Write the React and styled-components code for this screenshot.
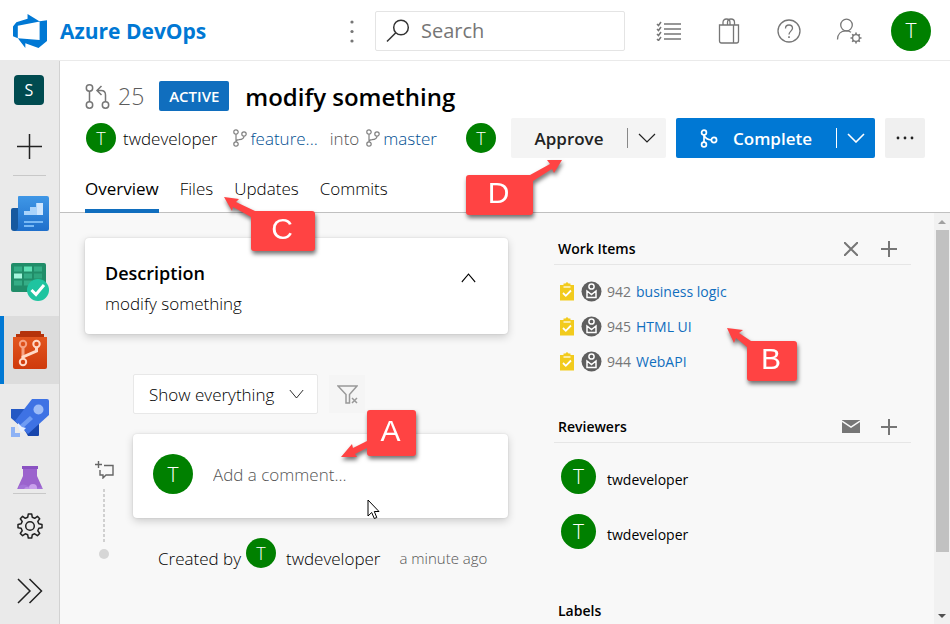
import React from "react";
import styled, { createGlobalStyle, css } from "styled-components";

const GlobalStyle = createGlobalStyle`
  *, *::before, *::after { box-sizing: border-box; }
  body {
    margin: 0;
    font-family: "Open Sans", "Noto Sans", sans-serif;
    font-size: 17px;
    font-weight: 300;
    color: #000;
    background: #fff;
  }
  button, input, select { font: inherit; color: inherit; }
  button { border: 0; background: none; padding: 0; cursor: pointer; }
  a { color: inherit; text-decoration: none; }
  h1, h2, ul, p { margin: 0; padding: 0; }
  ul { list-style: none; }
  svg { display: block; flex: none; }
`;

const Page = styled.div`
  position: relative;
  display: flex;
  flex-direction: column;
  height: 100vh;
  overflow: hidden;
`;

/* ---------- top bar ---------- */
const TopBar = styled.header`
  display: flex;
  align-items: center;
  flex: none;
  height: 61px;
  padding: 1px 19px 0 13px;
  border-bottom: 1px solid #eaeaea;
`;
const Brand = styled.a`
  display: flex;
  align-items: center;
  gap: 13px;
  margin-right: auto;
  color: #0078d4;
  font-size: 21px;
  font-weight: 700;
  white-space: nowrap;
`;
const IconButton = styled.button`
  display: flex;
  align-items: center;
  justify-content: center;
  flex: none;
  width: ${(p) => p.$width || 60}px;
  height: ${(p) => p.$height || 40}px;
  color: ${(p) => p.$color || "#767676"};
  background: ${(p) => p.$bg || "none"};
  border-radius: 2px;
`;
const SearchBox = styled.label`
  display: flex;
  align-items: center;
  gap: 11px;
  width: 250px;
  height: 40px;
  margin: 0 14px 0 7px;
  padding: 0 10px;
  border: 1px solid #e4e4e4;
  border-radius: 2px;
  color: #333;
`;
const TextField = styled.input`
  flex: 1;
  min-width: 0;
  border: 0;
  outline: 0;
  padding: 0;
  background: none;
  font-size: ${(p) => p.$size}px;
  &::placeholder { color: #555; opacity: 1; }
`;
const SearchField = styled(TextField)`
  font-weight: 400;
  &::placeholder { color: #767676; }
`;
const Avatar = styled.span`
  display: flex;
  align-items: center;
  justify-content: center;
  flex: none;
  width: ${(p) => p.$size}px;
  height: ${(p) => p.$size}px;
  border-radius: 50%;
  background: #008000;
  color: #fff;
  font-size: ${(p) => (p.$size > 30 ? 21 : 18)}px;
  font-weight: 300;
  line-height: 1;
`;
const AccountButton = styled.button`
  margin-left: 12px;
`;

/* ---------- side bar ---------- */
const Body = styled.div`
  display: flex;
  flex: 1;
  min-height: 0;
`;
const SideBar = styled.nav`
  display: flex;
  flex-direction: column;
  flex: none;
  width: 60px;
  background: #eaeaea;
  border-right: 1px solid #d2d2d2;
`;
const SideTop = styled.div`
  display: flex;
  flex-direction: column;
  align-items: center;
  flex: none;
  padding-top: 14px;
`;
const ProjectTile = styled.a`
  display: flex;
  align-items: center;
  justify-content: center;
  width: 30px;
  height: 30px;
  margin-right: 1px;
  border-radius: 4px;
  background: #004b50;
  color: #fff;
  font-size: 16px;
  font-weight: 400;
`;
const SideButton = styled.button`
  display: flex;
  align-items: center;
  justify-content: center;
  width: 100%;
  height: ${(p) => p.$height}px;
  padding-top: ${(p) => p.$top || 0}px;
  color: #222;
`;
const SideRule = styled.hr`
  flex: none;
  width: 33px;
  height: 1px;
  margin: 0 auto;
  border: 0;
  background: #c8c8c8;
`;
const HubList = styled.ul`
  flex: 1;
  min-height: 0;
  margin: 4px 0;
  overflow: hidden;
`;
const HubLink = styled.a`
  display: flex;
  align-items: center;
  justify-content: center;
  height: 68px;
  border-left: 4px solid transparent;
  padding-right: 4px;
  ${(p) => p.$active && css`
    background: #dcdcdc;
    border-left-color: #0078d4;
  `}
`;

/* ---------- pull request header ---------- */
const Main = styled.main`
  display: flex;
  flex-direction: column;
  flex: 1;
  min-width: 0;
`;
const PrHeader = styled.div`
  flex: none;
  padding: 15px 25px 0;
  border-bottom: 1px solid #c0c0c0;
`;
const TitleRow = styled.div`
  display: flex;
  align-items: center;
  height: 40px;
  color: #767676;
`;
const PrNumber = styled.span`
  margin-left: 8px;
  color: #5c5c5c;
  font-size: 23px;
`;
const Badge = styled.span`
  margin: 0 16px 0 15px;
  width: 70px;
  text-align: center;
  border-radius: 2px;
  background: #106ebe;
  color: #fff;
  font-size: 15px;
  font-weight: 600;
  line-height: 30px;
`;
const Title = styled.h1`
  color: #000;
  font-size: 24px;
  font-weight: 600;
  white-space: nowrap;
`;
const MetaRow = styled.div`
  display: flex;
  align-items: center;
  height: 44px;
  padding-left: 1px;
  white-space: nowrap;
`;
const Author = styled.span`
  margin: 0 16px 0 7px;
`;
const BranchLink = styled.a`
  display: flex;
  align-items: center;
  gap: 3px;
  color: #004f92;
  svg { color: #808080; }
`;
const Into = styled.span`
  margin: 0 7px 0 12px;
  color: #555;
`;
const Actions = styled.div`
  display: flex;
  align-items: center;
  gap: 10px;
  margin-left: auto;
`;
const ApproverAvatar = styled(Avatar)`
  margin-right: 5px;
`;
const SplitButton = styled.div`
  display: flex;
  align-items: center;
  width: ${(p) => p.$width}px;
  height: 40px;
  border-radius: 2px;
  background: ${(p) => (p.$primary ? "#0078d4" : "#f4f4f4")};
  color: ${(p) => (p.$primary ? "#fff" : "#222")};
  font-weight: 600;
`;
const SplitMain = styled.button`
  display: flex;
  align-items: center;
  justify-content: center;
  gap: 15px;
  flex: 1;
  height: 40px;
`;
const SplitMore = styled.button`
  display: flex;
  align-items: center;
  justify-content: center;
  width: 39px;
  height: 20px;
  border-left: 1px solid ${(p) => (p.$primary ? "#fff" : "#888")};
`;
const Tabs = styled.nav`
  display: flex;
  gap: 21px;
  height: 53px;
  padding-top: 8px;
  margin-bottom: -1px;
`;
const Tab = styled.a`
  display: flex;
  align-items: center;
  padding-bottom: ${(p) => (p.$active ? 0 : 4)}px;
  border-bottom: ${(p) => (p.$active ? "4px solid #106ebe" : "0")};
  font-weight: ${(p) => (p.$active ? 400 : 300)};
`;

/* ---------- content ---------- */
const Content = styled.div`
  display: flex;
  flex: 1;
  min-height: 0;
  overflow: hidden;
  background: #f8f8f8;
`;
const Columns = styled.div`
  display: grid;
  grid-template-columns: minmax(0, 423fr) minmax(0, 357fr);
  column-gap: 46px;
  flex: 1;
  padding: 25px 23px 0 25px;
`;
const Card = styled.section`
  display: flex;
  border-radius: 4px;
  background: #fff;
  box-shadow: 0 3px 8px rgba(0, 0, 0, 0.18), 0 0 2px rgba(0, 0, 0, 0.12);
`;
const DescriptionCard = styled(Card)`
  justify-content: space-between;
  height: 96px;
  padding: 20px;
  line-height: 30px;
`;
const CardTitle = styled.h2`
  color: #000;
  font-size: 18px;
  font-weight: 600;
  line-height: 31px;
`;
const CollapseButton = styled.button`
  width: 40px;
  height: 40px;
  display: flex;
  align-items: center;
  justify-content: center;
`;
const Feed = styled.div`
  padding: 40px 0 0 48px;
`;
const FilterRow = styled.div`
  display: flex;
  align-items: center;
  gap: 11px;
  margin-bottom: 20px;
`;
const SelectFrame = styled.div`
  display: grid;
  align-items: center;
  width: 185px;
  height: 40px;
  border: 1px solid #e8e8e8;
  border-radius: 2px;
  background: #fff;
  & > * { grid-area: 1 / 1; }
  svg { justify-self: end; margin-right: 13px; pointer-events: none; }
`;
const FeedSelect = styled.select`
  appearance: none;
  width: 100%;
  height: 38px;
  padding: 0 36px 0 15px;
  border: 0;
  outline: 0;
  background: none;
`;
const ClearFilter = styled.button`
  display: flex;
  align-items: center;
  justify-content: center;
  width: 36px;
  height: 38px;
  background: #f5f5f5;
  color: #999;
`;
const Thread = styled.div`
  display: grid;
  grid-template-columns: 38px 1fr;
  margin-left: -38px;
`;
const Rail = styled.div`
  display: flex;
  flex-direction: column;
  align-items: flex-start;
  padding-top: 27px;
  color: #666;
`;
const RailLine = styled.span`
  width: 2px;
  height: 54px;
  margin: 10px 0 6px 8px;
  background: repeating-linear-gradient(#d0d0d0 0 3px, transparent 3px 5px);
`;
const RailDot = styled.span`
  width: 10px;
  height: 10px;
  margin-left: 4px;
  border-radius: 50%;
  background: #d6d6d6;
`;
const CommentCard = styled(Card)`
  align-items: center;
  gap: 20px;
  height: 84px;
  padding: 0 20px 4px;
`;
const CreatedRow = styled.p`
  display: flex;
  align-items: center;
  gap: 5px;
  height: 40px;
  margin: 20px 0 0 25px;
  white-space: nowrap;
`;
const CreatedAvatar = styled(Avatar)`
  margin-bottom: 10px;
`;
const CreatedName = styled.span`
  margin: 0 14px 0 5px;
`;
const Muted = styled.span`
  color: #555;
  font-size: 15px;
`;

const Side = styled.aside`
  font-size: 14px;
  font-weight: 400;
`;
const SideHeader = styled.div`
  display: flex;
  align-items: center;
  height: 32px;
  margin-top: ${(p) => p.$top}px;
  padding: 0 3px 0 4px;
  border-bottom: 1px solid #e6e6e6;
`;
const SideTitle = styled.h2`
  flex: 1;
  color: #000;
  font-size: 14px;
  font-weight: 600;
`;
const WorkItem = styled.li`
  display: flex;
  align-items: center;
  height: 35px;
  padding-left: 6px;
`;
const WorkList = styled.ul`
  padding-top: 9px;
`;
const WorkId = styled.span`
  margin: 0 5px 0 5px;
  color: #767676;
`;
const WorkLink = styled.a`
  color: #106ebe;
`;
const PersonIcon = styled.svg`
  margin-left: 7px;
`;
const ReviewerList = styled.ul`
  padding-top: 6px;
`;
const Reviewer = styled.li`
  display: flex;
  align-items: center;
  gap: 11px;
  height: 55px;
  padding-left: 7px;
  color: #000;
`;
const ReviewerName = styled.span`
  padding-top: 5px;
`;

const ScrollTrack = styled.div`
  display: flex;
  flex-direction: column;
  align-items: center;
  flex: none;
  width: 16px;
  background: #f1f1f1;
`;
const ScrollArrow = styled.button`
  display: flex;
  align-items: center;
  justify-content: center;
  width: 16px;
  height: 17px;
  color: ${(p) => p.$color};
`;
const ScrollThumb = styled.div`
  width: 13px;
  flex: 322;
  background: #c1c1c1;
`;
const ScrollRest = styled.div`
  flex: 55;
`;

/* ---------- markers lying over the page ---------- */
const Marker = styled.div`
  position: absolute;
  left: ${(p) => p.$x}px;
  top: ${(p) => p.$y}px;
  width: ${(p) => p.$w}px;
  height: ${(p) => p.$h}px;
  display: flex;
  align-items: center;
  justify-content: center;
  padding: 0 2px 4px 0;
  border-radius: 3px;
  background: #ff4343;
  color: #fff;
  font-family: "Liberation Sans", Arial, sans-serif;
  font-size: 30px;
  font-weight: 400;
  line-height: 1;
  filter: drop-shadow(1px 3px 2px rgba(0, 0, 0, 0.55));
`;
const MarkerArrow = styled.svg`
  position: absolute;
  left: 0;
  top: 0;
  overflow: visible;
`;
const Pointer = styled.svg`
  position: absolute;
  left: 367px;
  top: 499px;
`;

const line = { fill: "none", stroke: "currentColor" };

function Chevron({ up, width = 18, weight = 1.2 }) {
  return (
    <svg width={width} height="10" viewBox="0 0 18 10" preserveAspectRatio="none" {...line} strokeWidth={weight}>
      <path d={up ? "M1 9l8-8 8 8" : "M1 1l8 8 8-8"} />
    </svg>
  );
}

function BranchIcon() {
  return (
    <svg width="14" height="18" viewBox="0 0 14 18" {...line} strokeWidth="1.2">
      <circle cx="3" cy="3" r="2.2" />
      <circle cx="3" cy="15" r="2.2" />
      <circle cx="11" cy="5" r="2.2" />
      <path d="M3 5.2v7.6M11 7.2c0 3-3 3.3-5 3.5-1.500.1-3 .6-3 2.100" />
    </svg>
  );
}

function LogoIcon() {
  return (
    <svg width="34" height="34" viewBox="1 1 14 14" fill="#0078d4">
      <path d="M15 3.622v8.512L11.500 15l-5.425-1.975v1.958L3.004 10.970l8.951.7V4.005L15 3.622zm-2.984.428L6.994 1v2.001L2.382 4.356 1 6.130v4.029l1.978.873V5.869l9.038-1.818z" />
    </svg>
  );
}

function OverviewIcon() {
  return (
    <svg width="38" height="36" viewBox="0 0 38 36">
      <defs>
        <linearGradient id="ov" x1="0" y1="0" x2="0" y2="1">
          <stop offset="0" stopColor="#3f97e6" /><stop offset="1" stopColor="#1f6fcb" />
        </linearGradient>
      </defs>
      <path d="M0 14q0-2 2-2h10v23H3q-3 0-3-3z" fill="#17599f" />
      <path d="M8 0h28q2 0 2 2v31q0 2-2 2H4q3-1 3-4V1q0-1 1-1z" fill="url(#ov)" />
      <path d="M13 15h6v-4h6V7h7v12H13z" fill="#a9d3fb" />
      <path d="M26 7h6v12h-6z" fill="#cfe6fd" />
      <path d="M13 25h19v2H13zM13 29h10v2H13z" fill="#78b8f5" />
    </svg>
  );
}

function BoardsIcon() {
  return (
    <svg width="38" height="38" viewBox="0 0 38 38">
      <rect x="0" y="0" width="35" height="29" rx="2" fill="#218d69" />
      <path d="M3 3.500h8v5H3zM23 3.500h8v5h-8zM13 10.500h8v5h-8zM3 17.500h8v5H3zM13 17.500h8v5h-8z" fill="#35ad86" />
      <path d="M13 3.500h8v5h-8z" fill="#5fe0b5" />
      <path d="M3 10.500h8v5H3z" fill="#a4f5dc" />
      <path d="M23 10.500h8v5h-8z" fill="#2ea57d" />
      <circle cx="27" cy="27" r="11" fill="#1fc4a0" />
      <path d="M20.500 27l4.500 4.500 8-9.500" fill="none" stroke="#fff" strokeWidth="3" />
    </svg>
  );
}

function ReposIcon() {
  return (
    <svg width="36" height="38" viewBox="0 0 36 38">
      <defs>
        <linearGradient id="rp" x1="0" y1="0" x2="0" y2="1">
          <stop offset="0" stopColor="#e2561f" /><stop offset="1" stopColor="#cf3a0c" />
        </linearGradient>
      </defs>
      <path d="M4 3h4V1q0-1 1-1h19q1 0 1 1v2h3v6H4z" fill="#b5330b" />
      <path d="M1 6h34v30q0 2-2 2H3q-2 0-2-2z" fill="url(#rp)" />
      <g fill="none" stroke="#ffd9c8" strokeWidth="2">
        <circle cx="11" cy="13" r="3.200" stroke="#f6a283" /><circle cx="24.500" cy="13" r="3.200" /><circle cx="11" cy="31" r="3.200" />
        <path d="M11 16v12" stroke="#f6a283" strokeWidth="3" /><path d="M24.500 16v4L11 26v2" strokeWidth="3" />
      </g>
    </svg>
  );
}

function PipelinesIcon() {
  return (
    <svg width="38" height="38" viewBox="0 0 38 38">
      <path d="M0 10h16L8 26l-8-7z" fill="#2458c4" />
      <path d="M13 30l15-9v15q0 1-1 1H17z" fill="#1846ad" />
      <path d="M21 0h15q2 0 2 2v14L17 35 4 22z" fill="#3e72e4" />
      <path d="M19 17l3 3-10 9-3-3z" fill="#6f9cf3" />
      <path d="M7 24l4 4 4 1-3 3 1 2-4-2-2-5z" fill="#e8f0ff" />
      <circle cx="27.500" cy="10.500" r="5" fill="#9dbcf7" />
      <path d="M0 28h4v6h5v4H0z" fill="#8db2f5" />
    </svg>
  );
}

function TestPlansIcon() {
  return (
    <svg width="28" height="40" viewBox="0 0 28 40">
      <path d="M6 0h16v3h-1v7l5 11 2 5v6q0 3-3 3H3q-3 0-3-3v-6l2-5 5-11V3H6z" fill="#9b63cd" />
      <path d="M6 0h16v3H6z" fill="#8a52c2" />
      <path d="M3 20q4-3 9 0t14 1v8H1z" fill="#a472d8" />
      <circle cx="17" cy="22" r="4" fill="#c9a0ec" />
      <circle cx="11" cy="24" r="3" fill="#bd90e4" />
    </svg>
  );
}

function GearIcon() {
  return (
    <svg width="26" height="26" viewBox="0 0 26 26" {...line} strokeWidth="1.500" strokeLinejoin="round">
      <path d="M10.700 4.300L11.300 1h3.400l.6 3.300 2.400 1 2.700-1.900 2.300 2.300-1.900 2.700 1 2.400 3.200.600v3.300l-3.200.600-1 2.400 1.900 2.700-2.300 2.300-2.700-1.900-2.400 1-.6 3.200h-3.400l-.6-3.200-2.400-1-2.700 1.900-2.300-2.300 1.900-2.700-1-2.400-3.200-.6v-3.300l3.200-.6 1-2.400-1.900-2.700 2.300-2.300 2.700 1.900z" />
      <circle cx="13" cy="13" r="4.300" />
    </svg>
  );
}

const hubs = [
  ["Overview", OverviewIcon],
  ["Boards", BoardsIcon],
  ["Repos", ReposIcon],
  ["Pipelines", PipelinesIcon],
  ["Test Plans", TestPlansIcon],
];

const workItems = [
  ["942", "business logic"],
  ["945", "HTML UI"],
  ["944", "WebAPI"],
];

const markers = [
  { text: "A", x: 367, y: 410, w: 49, h: 46, arrow: "-26,47 -15,34 -14,38 2,30 2,37 -12,44 -10,47" },
  { text: "B", x: 747, y: 341, w: 50, h: 40, arrow: "-20,-13 -4,-11 -8,-8 4,0 0,6 -11,-3 -13,2" },
  { text: "C", x: 251, y: 211, w: 64, h: 40, arrow: "-27,-14 -12,-12 -15,-9 4,0 0,6 -18,-4 -19,0" },
  { text: "D", x: 466, y: 175, w: 67, h: 40, arrow: "96,-15 81,-15 84,-11 64,0 67,6 86,-6 88,-2" },
];

function PlusIcon({ size, weight }) {
  return (
    <svg width={size} height={size} viewBox={`0 0 ${size} ${size}`} {...line} strokeWidth={weight}>
      <path d={`M0 ${size / 2}h${size}M${size / 2} 0v${size}`} />
    </svg>
  );
}

function TopNavigation() {
  return (
    <TopBar>
      <Brand href="#home"><LogoIcon />Azure DevOps</Brand>
      <IconButton $width={32} aria-label="More">
        <svg width="4" height="24" viewBox="0 0 4 24" fill="currentColor">
          <circle cx="2" cy="3" r="1.600" /><circle cx="2" cy="12.500" r="1.600" /><circle cx="2" cy="22" r="1.600" />
        </svg>
      </IconButton>
      <SearchBox>
        <svg width="24" height="24" viewBox="0 0 24 24" {...line} strokeWidth="1.500">
          <circle cx="15" cy="8.500" r="7.300" /><path d="M9.800 13.700L1 22.500" />
        </svg>
        <SearchField $size={20} type="search" placeholder="Search" aria-label="Search" />
      </SearchBox>
      <IconButton aria-label="Work items">
        <svg width="26" height="20" viewBox="0 0 26 20" {...line} strokeWidth="1.500">
          <path d="M8 3h17M8 8h17M8 13h17M8 18h17M1 3l1.500 1.500L5 1M1 8l1.500 1.500L5 6M1 13l1.500 1.500L5 11M1 18l1.500 1.500L5 16" />
        </svg>
      </IconButton>
      <IconButton aria-label="Marketplace">
        <svg width="22" height="26" viewBox="0 0 22 26" {...line} strokeWidth="1.300">
          <path d="M1.500 7h19v16q0 2-2 2h-15q-2 0-2-2zM15.500 7v18M5 7V4.500Q5 1 8.500 1T12 4.500V7M9.500 7V4.500Q9.500 1 13 1t3.500 3.500V7" />
        </svg>
      </IconButton>
      <IconButton aria-label="Help">
        <svg width="24" height="24" viewBox="0 0 24 24" {...line} strokeWidth="1.300">
          <circle cx="12" cy="12" r="11" />
          <path d="M8.500 9.500Q8.500 6 12 6t3.500 3.300c0 2.700-3.500 3-3.500 6.200" /><path d="M12 17.300v1.700" strokeWidth="1.600" />
        </svg>
      </IconButton>
      <IconButton aria-label="User settings">
        <svg width="26" height="26" viewBox="0 0 26 26" {...line} strokeWidth="1.300">
          <circle cx="10.500" cy="7" r="5.800" /><path d="M1.500 21.500C1.500 16 5 12.800 10 12.800c2 0 3.700.4 5 1.400" />
          <circle cx="20" cy="20" r="3.400" />
          <path d="M20 16.500V14.500M20 25.500v-2M14.500 20h2M23.500 20h2M16.200 16.200l1.400 1.400M22.400 22.400l1.400 1.400M16.200 23.800l1.400-1.400M22.400 17.600l1.400-1.400" strokeWidth="1.600" />
        </svg>
      </IconButton>
      <AccountButton aria-label="Account"><Avatar $size={40}>T</Avatar></AccountButton>
    </TopBar>
  );
}

function ProjectNavigation() {
  return (
    <SideBar aria-label="Project">
      <SideTop>
        <ProjectTile href="#project">S</ProjectTile>
        <SideButton $height={70} $top={13} aria-label="Add"><PlusIcon size={25} weight={1.5} /></SideButton>
      </SideTop>
      <SideRule />
      <HubList>
        {hubs.map(([name, Icon]) => (
          <li key={name}>
            <HubLink href={`#${name}`} aria-label={name} $active={name === "Repos"}><Icon /></HubLink>
          </li>
        ))}
      </HubList>
      <SideRule />
      <SideButton $height={64} aria-label="Project settings"><GearIcon /></SideButton>
      <SideButton $height={66} aria-label="Expand">
        <svg width="26" height="26" viewBox="0 0 26 26" {...line} strokeWidth="1.500"><path d="M1 1l12 12L1 25M12.500 1l12 12-12 12" /></svg>
      </SideButton>
    </SideBar>
  );
}

function PullRequestHeader() {
  return (
    <PrHeader>
      <TitleRow>
        <svg width="25" height="25" viewBox="0 0 25 25" {...line} strokeWidth="1.500">
          <circle cx="4.500" cy="4" r="3.200" /><circle cx="4.500" cy="21" r="3.200" /><circle cx="20.500" cy="21" r="3.200" />
          <path d="M4.500 7.200v10.600M20.500 17.800V11q0-4.500-4.500-4.500h-4M16.500 2L12 6.500l4.500 4.500" />
        </svg>
        <PrNumber>25</PrNumber>
        <Badge>ACTIVE</Badge>
        <Title>modify something</Title>
      </TitleRow>
      <MetaRow>
        <Avatar $size={30}>T</Avatar>
        <Author>twdeveloper</Author>
        <BranchLink href="#feature"><BranchIcon />feature...</BranchLink>
        <Into>into</Into>
        <BranchLink href="#master"><BranchIcon />master</BranchLink>
        <Actions>
          <ApproverAvatar $size={30}>T</ApproverAvatar>
          <SplitButton $width={155}>
            <SplitMain>Approve</SplitMain>
            <SplitMore aria-label="Approve options"><Chevron /></SplitMore>
          </SplitButton>
          <SplitButton $primary $width={199}>
            <SplitMain>
              <svg width="18" height="19" viewBox="0 0 18 19" {...line} strokeWidth="1.700">
                <circle cx="4" cy="3.500" r="2.400" /><circle cx="4" cy="15.500" r="2.400" /><circle cx="14" cy="11" r="2.600" />
                <path d="M4 6v7M4 6q1.500 4.500 7.400 5" />
              </svg>
              Complete
            </SplitMain>
            <SplitMore $primary aria-label="Complete options"><Chevron weight={1.6} /></SplitMore>
          </SplitButton>
          <IconButton $width={40} $bg="#f0f0f0" $color="#222" aria-label="More actions">
            <svg width="18" height="4" viewBox="0 0 18 4" fill="currentColor"><circle cx="2" cy="2" r="1.400" /><circle cx="9" cy="2" r="1.400" /><circle cx="16" cy="2" r="1.400" /></svg>
          </IconButton>
        </Actions>
      </MetaRow>
      <Tabs>
        <Tab href="#overview" $active>Overview</Tab>
        <Tab href="#files">Files</Tab>
        <Tab href="#updates">Updates</Tab>
        <Tab href="#commits">Commits</Tab>
      </Tabs>
    </PrHeader>
  );
}

function Conversation() {
  return (
    <div>
      <DescriptionCard>
        <div>
          <CardTitle>Description</CardTitle>
          <p>modify something</p>
        </div>
        <CollapseButton aria-label="Collapse description"><Chevron up width={15} weight={1.2} /></CollapseButton>
      </DescriptionCard>
      <Feed>
        <FilterRow>
          <SelectFrame>
            <FeedSelect aria-label="Activity filter"><option>Show everything</option></FeedSelect>
            <Chevron width={15} weight={0.9} />
          </SelectFrame>
          <ClearFilter aria-label="Clear filter">
            <svg width="21" height="19" viewBox="0 0 21 19" {...line} strokeWidth="1.500">
              <path d="M1 1h19l-7.500 8.500V18H9V9.500z" /><path d="M15 13l5 5M20 13l-5 5" />
            </svg>
          </ClearFilter>
        </FilterRow>
        <Thread>
          <Rail>
            <svg width="19" height="18" viewBox="0 0 19 18" {...line} strokeWidth="1.400">
              <path d="M0 3.500h7M3.500 0v7M9 4.500h9v9.500h-7L8 17v-3H5V9" />
            </svg>
            <RailLine />
            <RailDot />
          </Rail>
          <div>
            <CommentCard>
              <Avatar $size={40}>T</Avatar>
              <TextField $size={17} placeholder="Add a comment..." aria-label="Add a comment" />
            </CommentCard>
            <CreatedRow>
              Created by <CreatedAvatar $size={30}>T</CreatedAvatar>
              <CreatedName>twdeveloper</CreatedName>
              <Muted>a minute ago</Muted>
            </CreatedRow>
          </div>
        </Thread>
      </Feed>
    </div>
  );
}

function Details() {
  return (
    <Side>
      <SideHeader $top={-5}>
        <SideTitle>Work Items</SideTitle>
        <IconButton $width={38} $height={30} aria-label="Remove all work items">
          <svg width="14" height="14" viewBox="0 0 14 14" {...line} strokeWidth="2"><path d="M0 0l14 14M14 0L0 14" /></svg>
        </IconButton>
        <IconButton $width={38} $height={30} aria-label="Add work item"><PlusIcon size={16} weight={2} /></IconButton>
      </SideHeader>
      <WorkList>
        {workItems.map(([id, title]) => (
          <WorkItem key={id}>
            <svg width="14" height="19" viewBox="0 0 14 19">
              <path d="M0 3h3.500V1.500h2Q7-.8 8.500 1.500h2V3H14v15.500H0z" fill="#f2cb1d" />
              <path d="M3.500 5h7" stroke="#fff" strokeWidth="1.200" />
              <path d="M3 11l2.800 2.800L11 8.500" fill="none" stroke="#fff" strokeWidth="1.800" />
            </svg>
            <PersonIcon width="21" height="21" viewBox="0 0 21 21">
              <circle cx="10.500" cy="10.500" r="10" fill="#5f5f5f" />
              <g fill="none" stroke="#fff" strokeWidth="1.500"><circle cx="10.500" cy="5.500" r="2.600" /><path d="M6 10l4.500 3.500L15 10v6.500H6z" /></g>
            </PersonIcon>
            <WorkId>{id}</WorkId>
            <WorkLink href={`#${id}`}>{title}</WorkLink>
          </WorkItem>
        ))}
      </WorkList>
      <SideHeader $top={32}>
        <SideTitle>Reviewers</SideTitle>
        <IconButton $width={38} $height={30} aria-label="Notify reviewers">
          <svg width="18" height="13" viewBox="0 0 18 13"><path d="M0 0h18v13H0z" fill="currentColor" /><path d="M0 1l9 6 9-6" fill="none" stroke="#f8f8f8" strokeWidth="1.500" /></svg>
        </IconButton>
        <IconButton $width={38} $height={30} aria-label="Add reviewer"><PlusIcon size={16} weight={2} /></IconButton>
      </SideHeader>
      <ReviewerList>
        {[1, 2].map((n) => (
          <Reviewer key={n}><Avatar $size={35}>T</Avatar><ReviewerName>twdeveloper</ReviewerName></Reviewer>
        ))}
      </ReviewerList>
      <SideHeader $top={36}><SideTitle>Labels</SideTitle></SideHeader>
    </Side>
  );
}

export default function App() {
  return (
    <Page>
      <GlobalStyle />
      <TopNavigation />
      <Body>
        <ProjectNavigation />
        <Main>
          <PullRequestHeader />
          <Content>
            <Columns>
              <Conversation />
              <Details />
            </Columns>
            <ScrollTrack>
              <ScrollArrow $color="#a0a0a0" aria-label="Scroll up"><svg width="8" height="4" viewBox="0 0 8 4" fill="currentColor"><path d="M0 4l4-4 4 4z" /></svg></ScrollArrow>
              <ScrollThumb />
              <ScrollRest />
              <ScrollArrow $color="#505050" aria-label="Scroll down"><svg width="8" height="4" viewBox="0 0 8 4" fill="currentColor"><path d="M0 0l4 4 4-4z" /></svg></ScrollArrow>
            </ScrollTrack>
          </Content>
        </Main>
      </Body>
      {markers.map((m) => (
        <Marker key={m.text} $x={m.x} $y={m.y} $w={m.w} $h={m.h}>
          <MarkerArrow width="1" height="1"><polygon points={m.arrow} fill="#ff4343" /></MarkerArrow>
          {m.text}
        </Marker>
      ))}
      <Pointer width="13" height="21" viewBox="0 0 13 21">
        <path d="M1 1v16l3.700-3.500L7.300 19.500l2.500-1-2.500-6H12z" fill="#fff" stroke="#000" />
      </Pointer>
    </Page>
  );
}
